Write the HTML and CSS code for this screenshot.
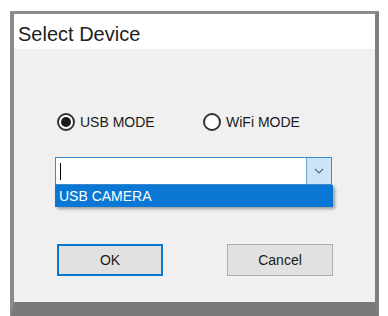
FILE: index.html
```html
<!DOCTYPE html>
<html lang="en">
<head>
    <meta charset="UTF-8">
    <meta name="viewport" content="width=device-width, initial-scale=1.0">
    <title>Select Device</title>
    <link rel="stylesheet" href="styles.css">
</head>
<body>
    <div id="dialog">
        <div id="titlebar">Select Device</div>
        <div id="content">
            <div id="modes">
                <label class="mode">
                    <span class="radio checked"></span>
                    <span>USB MODE</span>
                </label>
                <label class="mode">
                    <span class="radio"></span>
                    <span>WiFi MODE</span>
                </label>
            </div>
            <div id="combo">
                <div id="comboInput"><span class="caret"></span></div>
                <div id="comboButton">
                    <svg width="10" height="6" viewBox="0 0 10 6">
                        <path d="M1 1 L5 5 L9 1" fill="none" stroke="#5a6f86" stroke-width="1.2"/>
                    </svg>
                </div>
                <div id="comboList">
                    <div class="item selected">USB CAMERA</div>
                </div>
            </div>
            <div id="buttons">
                <button class="btn default">OK</button>
                <button class="btn">Cancel</button>
            </div>
        </div>
    </div>
</body>
</html>
```

FILE: styles.css
```css
body {
    margin: 0;
    padding: 0;
    background-color: #ffffff;
    font-family: "Liberation Sans", Arial, sans-serif;
    color: #1a1a1a;
    height: 316px;
    overflow: hidden;
}
#dialog {
    margin: 11px 0 0 10px;
    width: 361px;
    border-top: 3px solid #8c8c8c;
    border-left: 4px solid #8a8a8a;
    border-right: 4px solid #7e7e7e;
    border-bottom: 20px solid #7a7a7a;
    display: flex;
    flex-direction: column;
}
#titlebar {
    height: 29px;
    padding: 6px 0 0 4px;
    line-height: 29px;
    font-size: 20px;
    color: #222;
    background-color: #ffffff;
}
#content {
    height: 253px;
    background-color: #f0f0f0;
    display: flex;
    flex-direction: column;
}
#modes {
    display: flex;
    margin: 64px 0 0 43px;
    height: 18px;
}
.mode {
    display: flex;
    align-items: center;
    gap: 5px;
    font-size: 14px;
    line-height: 18px;
    width: 146px;
}
.radio {
    width: 14px;
    height: 14px;
    border: 2px solid #333;
    border-radius: 50%;
    background-color: #fff;
    display: flex;
    align-items: center;
    justify-content: center;
}
.radio.checked::after {
    content: "";
    width: 10px;
    height: 10px;
    border-radius: 50%;
    background-color: #1a1a1a;
}
#combo {
    position: relative;
    display: flex;
    margin: 26px 0 0 41px;
    width: 277px;
    height: 28px;
    box-sizing: border-box;
    border: 1px solid #3f8bd0;
    background-color: #fff;
}
#comboInput {
    flex-grow: 1;
    display: flex;
    align-items: center;
    padding-left: 4px;
}
.caret {
    width: 1px;
    height: 17px;
    background-color: #000;
}
#comboButton {
    width: 24px;
    background-color: #cce4f7;
    border-left: 1px solid #6fa7dc;
    display: flex;
    align-items: center;
    justify-content: center;
}
#comboList {
    position: absolute;
    left: -1px;
    top: 27px;
    width: 278px;
    box-shadow: 2px 2px 3px rgba(0, 0, 0, 0.35);
}
.item {
    height: 22px;
    line-height: 22px;
    padding-left: 4px;
    font-size: 14px;
}
.item.selected {
    background-color: #0a77d5;
    color: #ffffff;
}
#buttons {
    display: flex;
    gap: 64px;
    margin: 59px 0 0 43px;
}
.btn {
    width: 106px;
    height: 32px;
    font-family: "Liberation Sans", Arial, sans-serif;
    font-size: 14px;
    color: #1a1a1a;
    background-color: #e1e1e1;
    border: 1px solid #adadad;
    padding: 0;
}
.btn.default {
    border: 2px solid #0a77d5;
}
```
